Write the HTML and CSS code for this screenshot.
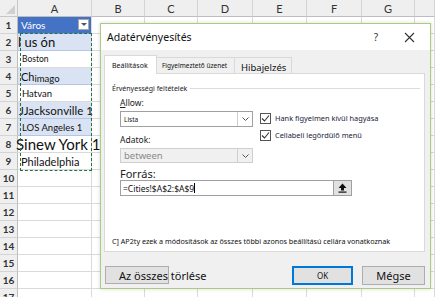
FILE: index.html
```html
<!DOCTYPE html>
<html lang="hu">
<head>
  <meta charset="UTF-8">
  <title>Adatérvényesítés</title>
  <link rel="stylesheet" href="styles.css">
</head>
<body>
  <div class="sheet">
    <div class="corner"><span class="tri"></span></div>
    <div class="ch">A</div><div class="ch">B</div><div class="ch">C</div><div class="ch">D</div>
    <div class="ch">E</div><div class="ch">F</div><div class="ch">G</div><div class="ch"></div>

    <div class="rh">1</div><div class="c hdr">Város<span class="filter"></span></div><div class="c"></div><div class="c"></div><div class="c"></div><div class="c"></div><div class="c"></div><div class="c"></div><div class="c"></div>
    <div class="rh">2</div><div class="c band t2">l us ón</div><div class="c"></div><div class="c"></div><div class="c"></div><div class="c"></div><div class="c"></div><div class="c"></div><div class="c"></div>
    <div class="rh">3</div><div class="c t3">Boston</div><div class="c"></div><div class="c"></div><div class="c"></div><div class="c"></div><div class="c"></div><div class="c"></div><div class="c"></div>
    <div class="rh">4</div><div class="c band t4">Ch<span class="sub">imago</span></div><div class="c"></div><div class="c"></div><div class="c"></div><div class="c"></div><div class="c"></div><div class="c"></div><div class="c"></div>
    <div class="rh">5</div><div class="c t5">Hatvan</div><div class="c"></div><div class="c"></div><div class="c"></div><div class="c"></div><div class="c"></div><div class="c"></div><div class="c"></div>
    <div class="rh">6</div><div class="c band t6">JJacksonville 1</div><div class="c"></div><div class="c"></div><div class="c"></div><div class="c"></div><div class="c"></div><div class="c"></div><div class="c"></div>
    <div class="rh">7</div><div class="c band t7">LOS Angeles 1</div><div class="c"></div><div class="c"></div><div class="c"></div><div class="c"></div><div class="c"></div><div class="c"></div><div class="c"></div>
    <div class="rh">8</div><div class="c t8">Sinew York 1</div><div class="c"></div><div class="c"></div><div class="c"></div><div class="c"></div><div class="c"></div><div class="c"></div><div class="c"></div>
    <div class="rh">9</div><div class="c t9">Philadelphia</div><div class="c"></div><div class="c"></div><div class="c"></div><div class="c"></div><div class="c"></div><div class="c"></div><div class="c"></div>
    <div class="rh">10</div><div class="c"></div><div class="c"></div><div class="c"></div><div class="c"></div><div class="c"></div><div class="c"></div><div class="c"></div><div class="c"></div>
    <div class="rh">11</div><div class="c"></div><div class="c"></div><div class="c"></div><div class="c"></div><div class="c"></div><div class="c"></div><div class="c"></div><div class="c"></div>
    <div class="rh">12</div><div class="c"></div><div class="c"></div><div class="c"></div><div class="c"></div><div class="c"></div><div class="c"></div><div class="c"></div><div class="c"></div>
    <div class="rh">13</div><div class="c"></div><div class="c"></div><div class="c"></div><div class="c"></div><div class="c"></div><div class="c"></div><div class="c"></div><div class="c"></div>
    <div class="rh">14</div><div class="c"></div><div class="c"></div><div class="c"></div><div class="c"></div><div class="c"></div><div class="c"></div><div class="c"></div><div class="c"></div>
    <div class="rh">15</div><div class="c"></div><div class="c"></div><div class="c"></div><div class="c"></div><div class="c"></div><div class="c"></div><div class="c"></div><div class="c"></div>
    <div class="rh">16</div><div class="c"></div><div class="c"></div><div class="c"></div><div class="c"></div><div class="c"></div><div class="c"></div><div class="c"></div><div class="c"></div>
    <div class="rh">17</div><div class="c"></div><div class="c"></div><div class="c"></div><div class="c"></div><div class="c"></div><div class="c"></div><div class="c"></div><div class="c"></div>
  </div>

  <!-- másolási kijelölés A2:A9 -->
  <div class="marquee"></div>

  <div class="dialog">
    <div class="titlebar">
      <span class="title">Adatérvényesítés</span>
      <span class="help">?</span>
      <svg class="close" width="11" height="11" viewBox="0 0 11 11"><path d="M1 1L10 10M10 1L1 10" stroke="#333" stroke-width="1.1" fill="none"/></svg>
    </div>
    <div class="body">
      <div class="tabs">
        <div class="tab active">Beállítások</div>
        <div class="tab small">Figyelmeztető üzenet</div>
        <div class="tab big">Hibajelzés</div>
      </div>
      <div class="pane">
        <div class="legend"><span>Érvényességi feltételek</span><span class="rule"></span></div>
        <div class="form">
          <div class="top">
            <div class="leftcol">
              <div class="lbl"><u>A</u>llow:</div>
              <div class="select"><span class="val small">Lista</span><span class="drop"><svg width="7" height="4" viewBox="0 0 7 4"><path d="M0.5 0.5L3.5 3.5L6.5 0.5" stroke="#555" fill="none"/></svg></span></div>
              <div class="lbl gap">Adatok:</div>
              <div class="select disabled"><span class="val grey">between</span><span class="drop"><svg width="7" height="4" viewBox="0 0 7 4"><path d="M0.5 0.5L3.5 3.5L6.5 0.5" stroke="#555" fill="none"/></svg></span></div>
            </div>
            <div class="checks">
              <div class="chk"><span class="box"><svg width="9" height="9" viewBox="0 0 9 9"><path d="M1 4.5L3.5 7L8 1.5" stroke="#333" stroke-width="1.1" fill="none"/></svg></span>Hank figyelmen kívül hagyása</div>
              <div class="chk"><span class="box"><svg width="9" height="9" viewBox="0 0 9 9"><path d="M1 4.5L3.5 7L8 1.5" stroke="#333" stroke-width="1.1" fill="none"/></svg></span>Cellabeli legördülő menü</div>
            </div>
          </div>
          <div class="lbl big">Forrás:</div>
          <div class="source">
            <div class="input">=Cities!$A$2:$A$9<span class="caret"></span></div>
            <div class="pick"><svg width="9" height="10" viewBox="0 0 9 10"><path d="M4.5 0.5L8.5 5H6V7.5H3V5H0.5Z" fill="#111"/><rect x="0.5" y="8.5" width="8" height="1.2" fill="#111"/></svg></div>
          </div>
        </div>
        <div class="note">C] AP2ty ezek a módosítások az összes többi azonos beállítású cellára vonatkoznak</div>
      </div>
      <div class="buttons">
        <div class="btn clear"><span>Az összes törlése</span></div>
        <div class="btn ok">OK</div>
        <div class="btn cancel">Mégse</div>
      </div>
    </div>
  </div>
</body>
</html>
```

FILE: styles.css
```css
body {
  margin: 0;
  width: 435px;
  height: 297px;
  overflow: hidden;
  background: #fff;
  font-family: Lato, "Liberation Sans", sans-serif;
  position: relative;
}
.sheet {
  display: grid;
  grid-template-columns: 18px 74px 53px 53px 55px 54px 55px 53px 1fr;
  grid-auto-rows: 17px;
}
.corner {
  background: #efefef;
  border-right: 1px solid #c6c6c6;
  border-bottom: 1px solid #c6c6c6;
  position: relative;
}
.tri {
  position: absolute;
  right: 2px;
  bottom: 2px;
  width: 0;
  height: 0;
  border-left: 9px solid transparent;
  border-bottom: 9px solid #d0d0d0;
}
.ch {
  background: #efefef;
  border-right: 1px solid #d4d4d4;
  border-bottom: 1px solid #bdbdbd;
  color: #333;
  font-size: 11px;
  display: flex;
  align-items: center;
  justify-content: center;
}
.rh {
  background: #efefef;
  border-right: 1px solid #bdbdbd;
  border-bottom: 1px solid #d4d4d4;
  color: #333;
  font-size: 10px;
  font-weight: bold;
  display: flex;
  align-items: flex-start;
  padding-top: 2px;
  box-sizing: border-box;
  justify-content: center;
  line-height: 13px;
}
.c {
  border-right: 1px solid #dadada;
  border-bottom: 1px solid #dadada;
  white-space: nowrap;
  display: flex;
  align-items: center;
  padding-left: 2px;
  color: #111;
  overflow: visible;
  position: relative;
  z-index: 1;
}
.hdr {
  background: #4472c4;
  color: #fff;
  font-size: 10px;
  padding-left: 3px;
  border-bottom-color: #8ea9db;
}
.filter {
  position: absolute;
  right: 2px;
  top: 2px;
  width: 11px;
  height: 11px;
  background: #fff;
  border: 1px solid #a8a8a8;
  box-sizing: border-box;
}
.filter::after {
  content: "";
  position: absolute;
  left: 2px;
  top: 3px;
  border-left: 3px solid transparent;
  border-right: 3px solid transparent;
  border-top: 3px solid #555;
}
.band {
  background: #dae3f3;
  border-bottom-color: #b4c6e7;
}
.t2 { font-size: 13px; padding-left: 0; }
.t3 { font-size: 8.5px; padding-left: 4px; }
.t4 { font-size: 11px; padding-left: 3px; }
.sub { font-size: 9.5px; position: relative; top: 2px; }
.t5 { font-size: 9.5px; padding-left: 4px; }
.t6 { font-size: 11.5px; padding-left: 1px; }
.t7 { font-size: 9.5px; padding-left: 4px; }
.t8 { font-size: 15px; padding-left: 0; margin-left: -2px; z-index: 2; }
.t9 { font-size: 11px; padding-left: 3px; }
.marquee {
  position: absolute;
  left: 20px;
  top: 33px;
  width: 70px;
  height: 136px;
  border: 1.5px dashed #217346;
  z-index: 3;
  pointer-events: none;
}

/* párbeszédpanel */
.dialog {
  position: absolute;
  left: 100px;
  top: 23px;
  width: 331px;
  height: 266px;
  box-sizing: border-box;
  border: 1px solid #a9cc7e;
  background: #f0f0f0;
  box-shadow: 0 0 4px rgba(0, 0, 0, 0.15);
  display: flex;
  flex-direction: column;
  font-family: "Noto Sans", "Open Sans", sans-serif;
  color: #111;
  z-index: 5;
}
.titlebar {
  height: 26px;
  background: #fff;
  display: flex;
  align-items: center;
  padding-left: 6px;
  flex-shrink: 0;
}
.title {
  font-size: 10.5px;
  flex: 1;
}
.help {
  font-size: 10px;
  color: #333;
  margin-right: 26px;
}
.close {
  margin-right: 15px;
}
.body {
  flex: 1;
  padding: 5px 5px 0 3px;
  display: flex;
  flex-direction: column;
}
.tabs {
  display: flex;
  align-items: flex-end;
  height: 18px;
  position: relative;
  z-index: 1;
}
.tab {
  height: 16px;
  border: 1px solid #d9d9d9;
  border-bottom: none;
  background: #f0f0f0;
  font-size: 7px;
  display: flex;
  align-items: center;
  padding: 0 6px;
  box-sizing: border-box;
  white-space: nowrap;
}
.tab.active {
  height: 19px;
  background: #fff;
  width: 53px;
  padding-left: 7px;
  margin-bottom: -1px;
}
.tab.small {
  width: 78px;
  border-left: none;
  font-size: 6.5px;
  padding-left: 5px;
  padding-right: 2px;
  overflow: hidden;
}
.tab.big {
  width: 57px;
  border-left: none;
  font-size: 9.5px;
  padding-top: 3px;
}
.pane {
  height: 179px;
  background: #fff;
  border: 1px solid #d9d9d9;
  box-sizing: border-box;
  flex-shrink: 0;
}
.legend {
  display: flex;
  align-items: center;
  height: 14px;
  margin-top: 7px;
  padding-left: 7px;
  font-size: 7px;
  color: #222;
}
.rule {
  flex: 1;
  border-top: 1px solid #dcdcdc;
  margin: 0 4px 0 3px;
}
.form {
  padding-left: 15px;
}
.top {
  display: flex;
  gap: 7px;
}
.leftcol {
  width: 133px;
}
.lbl {
  font-size: 8.5px;
  line-height: 12px;
  height: 12px;
  margin-top: 2px;
  color: #222;
}
.lbl.gap {
  margin-top: 7px;
}
.lbl.big {
  font-size: 11px;
  margin-top: 5px;
}
.select {
  height: 16px;
  border: 1px solid #a0a0a0;
  box-sizing: border-box;
  display: flex;
  align-items: center;
  margin-top: 2px;
  background: #fff;
}
.select.disabled {
  height: 15px;
  background: #f0f0f0;
  border-color: #cfcfcf;
}
.val {
  flex: 1;
  padding-left: 3px;
  font-size: 9.5px;
}
.val.small { font-size: 6.5px; }
.val.grey { color: #8a8a8a; }
.drop {
  width: 14px;
  height: 100%;
  border-left: 1px solid #cfcfcf;
  display: flex;
  align-items: center;
  justify-content: center;
}
.checks {
  padding-top: 18px;
  display: flex;
  flex-direction: column;
  gap: 7px;
}
.chk {
  display: flex;
  align-items: center;
  font-size: 7.4px;
  color: #1b1b3a;
  height: 10px;
}
.box {
  width: 11px;
  height: 11px;
  border: 1px solid #555;
  box-sizing: border-box;
  display: flex;
  align-items: center;
  justify-content: center;
  margin-right: 4px;
}
.source {
  display: flex;
  width: 232px;
  height: 16px;
}
.input {
  flex: 1;
  border: 1px solid #a0a0a0;
  border-right: none;
  box-sizing: border-box;
  font-size: 8.5px;
  display: flex;
  align-items: center;
  padding-left: 2px;
}
.caret {
  width: 1px;
  height: 10px;
  background: #000;
}
.pick {
  width: 19px;
  background: #e1e1e1;
  border: 1px solid #a0a0a0;
  box-sizing: border-box;
  display: flex;
  align-items: center;
  justify-content: center;
}
.note {
  margin-top: 40px;
  padding-left: 7px;
  font-size: 7.2px;
  white-space: nowrap;
  color: #111;
}
.buttons {
  display: flex;
  margin-top: 14px;
  height: 19px;
}
.btn {
  height: 19px;
  background: #e1e1e1;
  border: 1px solid #adadad;
  box-sizing: border-box;
  display: flex;
  align-items: center;
  justify-content: center;
  font-size: 11px;
}
.btn.clear {
  width: 64px;
  margin-left: 1px;
  height: 18px;
  justify-content: flex-start;
  white-space: nowrap;
}
.btn.clear span {
  margin-left: 13px;
}
.btn.ok {
  width: 61px;
  margin-left: auto;
  border: 2px solid #0078d7;
  font-size: 8px;
}
.btn.cancel {
  width: 63px;
  margin-left: 9px;
}
```
